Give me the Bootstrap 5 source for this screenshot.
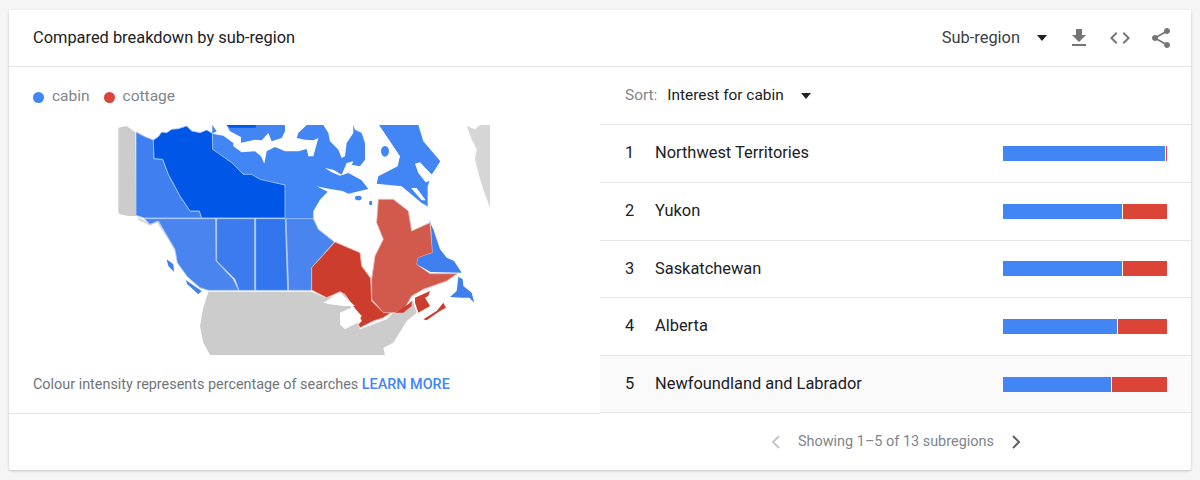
<!DOCTYPE html>
<html lang="en">
<head>
<meta charset="utf-8">
<title>Compared breakdown by sub-region</title>
<link rel="stylesheet" href="https://cdn.jsdelivr.net/npm/bootstrap@5.3.0/dist/css/bootstrap.min.css">
<style>
html,body{height:100%;overflow:hidden}
body{background:#f5f5f5;font-family:Roboto,"Liberation Sans",sans-serif;font-size:16.4px;color:#202124;padding:10px 9px 0}
.panel{height:460px;border:0;border-radius:2px;box-shadow:0 1px 3px rgba(60,64,67,.28);background:#fff}
.panel-head{height:57px;padding:0 18px 0 24px;border-bottom:1px solid #e6e6e6}
.panel-title{margin:0;font-size:16.4px;font-weight:400;color:#202124}
.scope{color:#3c4043;margin-right:17px}
.tri{width:0;height:0;border-left:5.5px solid transparent;border-right:5.5px solid transparent;border-top:6px solid #202124}
.tool{display:block;width:24px;height:24px;fill:#757575}
.tools{gap:17px;margin-left:20px}
.left-pane{height:347px;border-bottom:1px solid #e6e6e6}
.legend{height:60px;padding-left:24px;color:#80868b;font-size:15.5px}
.dot{width:11px;height:11px;border-radius:50%}
.dot-a{background:#4285f4}
.dot-b{background:#db4437}
.legend-gap{margin-right:6px}
.geo{display:block;width:400px;height:250px;margin:-11px 0 0 91px;filter:blur(.3px)}
.note{margin:8px 0 0 24px;font-size:14.4px;color:#70757a}
.note a{color:#4285f4;font-weight:500;text-decoration:none}
.sort-row{height:57px;padding:1px 0 0 25px;font-size:15.4px;color:#202124}
.sort-lab{color:#80868b;margin-right:10px}
.sort-row .tri{margin-left:17px}
.list-group-flush>.rank-row{height:57.8px;padding:0 24px 0 25px;border-width:1px 0 0;border-style:solid;border-color:#e6e6e6;border-radius:0;color:#202124}
.list-group-flush>.rank-row.hot{background:#fafafa;border-bottom-width:1px}
.rank-no{width:30px}
.meter{width:164px;height:15px;gap:1px}
.seg-a{background:#4285f4}
.seg-b{background:#db4437}
.pager{height:56px;font-size:14.45px;color:#80868b}
.pager-in{padding-left:761px;gap:16px}
.chev{display:block;width:12px;height:14px;fill:none;stroke-width:2}
.chev-off{stroke:#c4c7ca}
.chev-on{stroke:#5f6368}
</style>
</head>
<body>
<div class="card panel">
  <div class="panel-head d-flex align-items-center justify-content-between">
    <h2 class="panel-title">Compared breakdown by sub-region</h2>
    <div class="d-flex align-items-center">
      <span class="scope">Sub-region</span><span class="tri"></span>
      <div class="tools d-flex align-items-center">
        <svg class="tool" viewBox="0 0 24 24"><path d="M19 9h-4V3H9v6H5l7 7 7-7zM5 18v2h14v-2H5z"/></svg>
        <svg class="tool" viewBox="0 0 24 24"><path d="M9.4 16.6L4.8 12l4.6-4.6L8 6l-6 6 6 6 1.4-1.4zm5.2 0l4.6-4.6-4.6-4.6L16 6l6 6-6 6-1.4-1.4z"/></svg>
        <svg class="tool" viewBox="0 0 24 24"><path d="M18 16.08c-.76 0-1.44.3-1.96.77L8.91 12.7c.05-.23.09-.46.09-.7s-.04-.47-.09-.7l7.05-4.11c.54.5 1.25.81 2.04.81 1.66 0 3-1.34 3-3s-1.34-3-3-3-3 1.34-3 3c0 .24.04.47.09.7L8.04 9.81C7.5 9.31 6.79 9 6 9c-1.66 0-3 1.34-3 3s1.34 3 3 3c.79 0 1.5-.31 2.04-.81l7.12 4.16c-.05.21-.08.43-.08.65 0 1.61 1.31 2.92 2.92 2.92 1.61 0 2.92-1.31 2.92-2.92s-1.31-2.92-2.92-2.92z"/></svg>
      </div>
    </div>
  </div>
  <div class="row g-0">
    <div class="col-6 left-pane">
      <div class="legend d-flex align-items-center gap-2">
        <span class="dot dot-a"></span><span class="legend-gap">cabin</span>
        <span class="dot dot-b"></span><span>cottage</span>
      </div>
      <svg class="geo" viewBox="0 0 1200 750" stroke-linejoin="round">
        <g fill="#cccccc">
          <path d="M55 35L80 30 105 48 108 300 85 300 60 295 55 290Z"/>
          <path d="M1100 30L1125 40 1140 27 1170 27 1170 275 1155 235 1140 190 1125 130 1130 100 1115 70Z" fill-opacity=".8"/>
          <path d="M325 527L635 527 680 547 735 530 780 640 860 610 880 590 920 570 938 552 950 590 920 615 905 640 880 680 850 695 855 717 330 717 310 680 300 630 310 575Z"/>
        </g>
        <path fill="none" stroke="#dcdcdc" stroke-width="7" d="M115 308L150 325 172 315 215 380 235 420"/>
        <g transform="translate(315 21)">
          <path fill="#4285f4" d="M22 32L22 6 640 6 655 55 706 115 680 155 668 190 668 250 600 290 240 290 240 185 165 172 120 155 22 85Z"/>
          <g fill="#fff">
            <path d="M22 32L35 25 22 6 65 6 75 25 108 42 108 60 85 70 85 60 55 38Z"/>
            <path d="M85 70L105 60 150 50 170 52 190 30 200 55 230 45 240 25 240 6 305 6 280 30 275 45 300 50 325 52 340 45 325 100 310 100 305 78 280 85 240 85 210 72 185 85 178 122 168 100 150 85 110 88Z"/>
            <path d="M355 6L445 6 445 30 425 60 420 100 410 105 400 80 375 55 370 30Z"/>
            <path d="M445 6L522 6 545 40 585 100 578 130 520 160 515 182 590 190 650 240 665 248 665 300 325 300 325 265 345 230 368 206 335 190 375 198 413 204 430 212 490 198 470 172 430 150 440 125 465 130 480 110 480 60 470 30 450 20Z"/>
            <path d="M360 135L385 140 410 155 425 120 445 115 430 150 405 158 380 148Z"/>
            <path d="M630 122L645 118 690 165 680 172 662 178 640 150Z"/>
            <path d="M618 195L635 195 662 232 650 232Z"/>
          </g>
          <g fill="#4285f4">
            <ellipse cx="540" cy="85" rx="12" ry="16"/>
            <ellipse cx="460" cy="225" rx="10" ry="7"/>
            <ellipse cx="497" cy="240" rx="5" ry="7"/>
          </g>
        </g>
        <g stroke="#a9c6f8" stroke-width="2.5">
          <path fill="#3f7ff0" d="M108 48L135 62 160 72 162 128 188 130 205 175 240 240 270 285 298 285 305 306 133 306 108 298Z"/>
          <path fill="#0057e7" d="M160 72L175 62 185 48 200 50 215 40 235 38 260 30 275 45 300 50 320 42 337 52 338 100 395 140 430 175 455 175 480 190 555 207 555 306 305 306 298 285 270 285 240 240 205 175 188 130 162 128Z"/>
          <path fill="#4a84ee" d="M133 308L347 308 348 435 400 490 416 523 325 523 300 515 262 482 232 440 225 400 175 315 150 325Z"/>
          <path fill="#3b7bee" d="M350 308L464 308 464 523 417 523 405 490 350 435Z"/>
          <path fill="#3274ec" d="M467 308L556 308 563 523 467 523Z"/>
          <path fill="#4a84ee" d="M558 308L640 308 655 340 703 378 635 455 634 523 566 523Z"/>
        </g>
        <g stroke="#ecb4ad" stroke-width="2.5">
          <path fill="#cc3d2d" d="M705 378L780 410 785 450 812 487 815 555 845 585 880 585 850 605 820 615 780 635 775 625 785 615 770 585 755 565 735 535 720 527 680 545 635 522 635 455Z"/>
          <path fill="#d15a4d" d="M835 250L880 250 925 285 935 345 990 320 998 410 955 425 950 445 990 473 1072 473 1040 495 970 520 935 540 915 575 885 590 850 590 815 550 815 490 825 420 850 370 830 320Z"/>
        </g>
        <path fill="#0057e7" d="M380 27L467 27 467 35 390 35Z"/>
        <g fill="#3f7ff0">
          <path d="M985 310L1000 340 1020 400 1040 425 1062 435 1085 470 992 468 950 445 955 425 998 410 992 320Z"/>
          <path d="M1075 482L1088 490 1090 510 1115 530 1123 560 1108 545 1085 545 1050 543 1070 525Z"/>
          <path d="M257 492L305 525 295 535 262 505Z"/>
          <path d="M200 430L220 445 222 468 205 450Z"/>
        </g>
        <g fill="#cc3d2d">
          <path d="M945 545L990 525 985 540 975 545 990 570 955 590 945 560Z"/>
          <path d="M885 590L925 565 935 555 935 570 910 590Z"/>
          <path d="M970 610L1010 585 1030 560 1038 575 1020 585 980 613Z"/>
        </g>
        <g fill="#fff">
          <path d="M670 560L720 530 765 570 730 570 690 565Z"/>
          <path d="M720 590L760 572 785 600 770 622 735 640 720 625Z"/>
        </g>
      </svg>
      <p class="note">Colour intensity represents percentage of searches <a href="#">LEARN MORE</a></p>
    </div>
    <div class="col-6">
      <div class="sort-row d-flex align-items-center">
        <span class="sort-lab">Sort:</span><span>Interest for cabin</span><span class="tri"></span>
      </div>
      <ul class="list-group list-group-flush">
        <li class="list-group-item rank-row d-flex align-items-center"><span class="rank-no">1</span><span class="flex-grow-1">Northwest Territories</span><span class="meter d-flex"><span class="seg-a" style="width:162px"></span><span class="seg-b" style="width:1px"></span></span></li>
        <li class="list-group-item rank-row d-flex align-items-center"><span class="rank-no">2</span><span class="flex-grow-1">Yukon</span><span class="meter d-flex"><span class="seg-a" style="width:119px"></span><span class="seg-b" style="width:44px"></span></span></li>
        <li class="list-group-item rank-row d-flex align-items-center"><span class="rank-no">3</span><span class="flex-grow-1">Saskatchewan</span><span class="meter d-flex"><span class="seg-a" style="width:119px"></span><span class="seg-b" style="width:44px"></span></span></li>
        <li class="list-group-item rank-row d-flex align-items-center"><span class="rank-no">4</span><span class="flex-grow-1">Alberta</span><span class="meter d-flex"><span class="seg-a" style="width:114px"></span><span class="seg-b" style="width:49px"></span></span></li>
        <li class="list-group-item rank-row hot d-flex align-items-center"><span class="rank-no">5</span><span class="flex-grow-1">Newfoundland and Labrador</span><span class="meter d-flex"><span class="seg-a" style="width:108px"></span><span class="seg-b" style="width:55px"></span></span></li>
      </ul>
    </div>
  </div>
  <div class="pager d-flex align-items-center">
    <div class="pager-in d-flex align-items-center">
      <svg class="chev chev-off" viewBox="0 0 12 14"><path d="M9 1L3 7l6 6"/></svg>
      <span>Showing 1–5 of 13 subregions</span>
      <svg class="chev chev-on" viewBox="0 0 12 14"><path d="M3 1l6 6-6 6"/></svg>
    </div>
  </div>
</div>
</body>
</html>
